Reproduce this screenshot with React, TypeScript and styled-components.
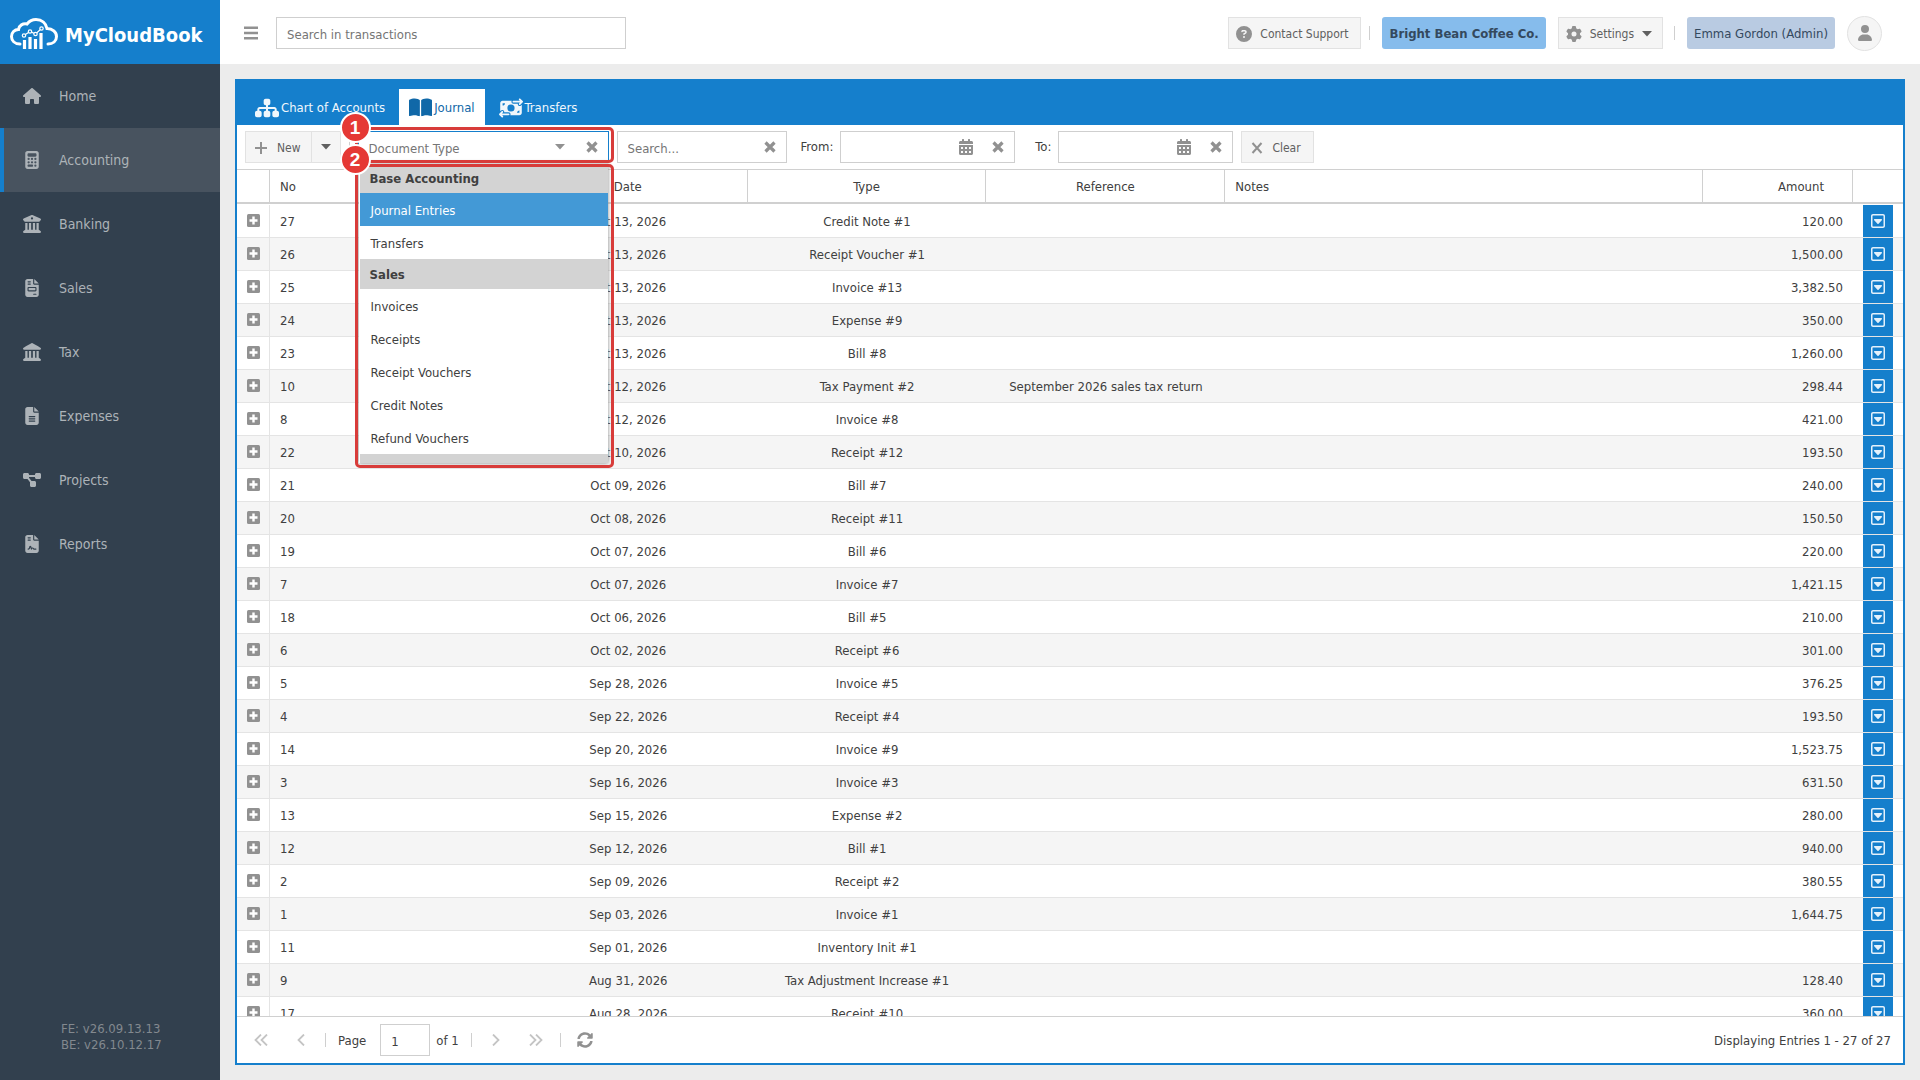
import React from "react";
import styled, { createGlobalStyle, css } from "styled-components";
import { FaCalendarAlt, FaSyncAlt } from "react-icons/fa";
import {
  FaBookOpen,
  FaBuildingColumns,
  FaCalculator,
  FaCircleQuestion,
  FaDiagramProject,
  FaFileContract,
  FaFileInvoice,
  FaFileLines,
  FaGear,
  FaHouse,
  FaLandmark,
  FaMoneyBillTransfer,
  FaRegSquareCaretDown,
  FaSitemap,
  FaUser,
} from "react-icons/fa6";

const blue = "#157fcc";
const line = "#d0d0d0";
const iconGray = "#919191";
const red = "#d83c3a";

const GlobalStyle = createGlobalStyle`
  *, *::before, *::after { box-sizing: border-box; }
  body {
    margin: 0;
    background: #ececec;
    color: #404040;
    font: 13px/16px "DejaVu Sans Condensed", "DejaVu Sans", sans-serif;
  }
  button, input { font: inherit; color: inherit; }
  button { padding: 0; border: 0; background: none; cursor: pointer; }
  a { color: inherit; text-decoration: none; }
  svg { display: block; flex: none; }
`;

/* ---------- shell ---------- */

const Shell = styled.div`
  display: flex;
  height: 100vh;
`;

const Sidebar = styled.aside`
  display: flex;
  flex-direction: column;
  flex: 0 0 220px;
  background: #32404e;
  color: #adb3b8;
`;

const Brand = styled.a`
  display: flex;
  align-items: center;
  gap: 7px;
  height: 64px;
  padding: 4px 10px 0;
  background: ${blue};
  color: #fff;
  font-size: 20px;
  line-height: 24px;
  font-weight: bold;
`;

const BrandName = styled.span`
  padding-top: 2px;
`;

const Nav = styled.nav`
  display: flex;
  flex-direction: column;
  flex: 1;
`;

const NavItem = styled.a<{ $active?: boolean }>`
  display: flex;
  align-items: center;
  gap: 15px;
  height: 64px;
  padding-left: 16px;
  font-size: 14px;
  border-left: 4px solid transparent;
  ${(p) => p.$active && css`
    background: #48535f;
    border-left-color: ${blue};
  `}
`;

const NavIcon = styled.span`
  display: flex;
  justify-content: center;
  width: 24px;
  font-size: 18px;
`;

const Version = styled.div`
  padding: 0 0 27px 61px;
  color: #83898f;
`;

const Main = styled.div`
  display: flex;
  flex-direction: column;
  flex: 1;
  min-width: 0;
`;

/* ---------- header ---------- */

const Header = styled.header`
  display: flex;
  align-items: center;
  height: 64px;
  padding: 2px 38px 0 15px;
  background: #fff;
`;

const IconButton = styled.button<{ $faded?: boolean }>`
  display: flex;
  align-items: center;
  justify-content: center;
  flex: none;
  width: 32px;
  height: 30px;
  color: ${(p) => (p.$faded ? "#c4c4c4" : iconGray)};
`;

const GlobalSearch = styled.input`
  width: 350px;
  height: 32px;
  margin: 0 auto 0 9px;
  padding: 2px 10px 0;
  border: 1px solid #cfcfcf;
  background: #fff;
  outline: none;
  &::placeholder { color: #757575; opacity: 1; }
`;

const Button = styled.button`
  display: flex;
  align-items: center;
  gap: 8px;
  height: 32px;
  padding: 1px 12px 0 7px;
  border: 1px solid #e2e2e2;
  background: #f5f5f5;
  color: #606060;
  font-size: 12px;
  svg:first-child { color: ${iconGray}; }
`;

const SettingsButton = styled(Button)`
  margin-left: 12px;
  padding-right: 10px;
`;

const Pill = styled.button<{ $strong?: boolean }>`
  height: 32px;
  padding: 2px 7px 0;
  border-radius: 3px;
  background: ${(p) => (p.$strong ? "#86bcec" : "#b9cbe2")};
  color: #34495e;
  font-weight: ${(p) => (p.$strong ? "bold" : "normal")};
`;

const Divider = styled.span<{ $left?: number; $right?: number }>`
  flex: none;
  width: 1px;
  height: 14px;
  margin: 0 ${(p) => p.$right ?? 12}px 0 ${(p) => p.$left ?? 8}px;
  background: #cfcfcf;
`;

const Avatar = styled.button`
  display: flex;
  align-items: center;
  justify-content: center;
  width: 35px;
  height: 35px;
  margin-left: 12px;
  border: 1px solid #e2e2e2;
  border-radius: 50%;
  background: #f5f5f5;
  color: ${iconGray};
  font-size: 16px;
`;

/* ---------- panel ---------- */

const Content = styled.main`
  display: flex;
  flex: 1;
  min-height: 0;
  padding: 15px;
`;

const Panel = styled.section`
  display: flex;
  flex-direction: column;
  flex: 1;
  min-width: 0;
  border: 2px solid ${blue};
  background: #fff;
`;

const Tabs = styled.div`
  display: flex;
  gap: 4px;
  padding: 8px 8px 0;
  background: ${blue};
`;

const Tab = styled.button<{ $active?: boolean }>`
  display: flex;
  align-items: center;
  gap: 2px;
  height: 36px;
  padding: 1px 10px 0;
  color: ${(p) => (p.$active ? "#1068a8" : "#f0f7fc")};
  background: ${(p) => (p.$active ? "#fff" : "transparent")};
`;

const Toolbar = styled.div`
  display: flex;
  align-items: center;
  height: 44px;
  padding: 0 8px;
`;

const SplitButton = styled.div`
  display: flex;
  height: 32px;
  border: 1px solid #e2e2e2;
  background: #f5f5f5;
  color: #606060;
`;

const SplitMain = styled.button`
  display: flex;
  align-items: center;
  gap: 10px;
  padding: 1px 10px 0 9px;
  font-size: 12px;
  svg { color: ${iconGray}; }
`;

const SplitArrow = styled.button`
  display: flex;
  align-items: center;
  justify-content: center;
  width: 29px;
  border-left: 1px solid #e2e2e2;
`;

const Field = styled.div<{ $width: number; $focused?: boolean; $left?: number }>`
  position: relative;
  display: flex;
  flex: none;
  width: ${(p) => p.$width}px;
  height: 32px;
  margin-left: ${(p) => p.$left ?? 0}px;
  border: 1px solid ${(p) => (p.$focused ? blue : "#cfcfcf")};
  background: #fff;
`;

const FieldInput = styled.input`
  flex: 1;
  min-width: 0;
  padding: 4px 0 0 10px;
  border: 0;
  outline: none;
  background: transparent;
  &::placeholder { color: #757575; opacity: 1; }
`;

const FieldLabel = styled.label<{ $left: number }>`
  margin: 0 7px 0 ${(p) => p.$left}px;
`;

const ClearButton = styled(Button)`
  gap: 9px;
  margin-left: 8px;
  padding: 1px 12px 0 9px;
`;

/* ---------- drop-down list and its callouts ---------- */

const Picker = styled.ul`
  position: absolute;
  z-index: 2;
  top: 31px;
  left: 0;
  right: 0;
  height: 300px;
  margin: 0;
  padding: 0 0 0 1px;
  overflow: hidden;
  list-style: none;
  background: #fff;
  box-shadow: 0 0 4px #888;
`;

const PickerGroup = styled.li`
  height: 30px;
  padding: 8px 10px 6px;
  background: #d3d3d3;
  font-weight: bold;
`;

const PickerItem = styled.li<{ $selected?: boolean }>`
  height: 33px;
  padding: 10px 11px 7px;
  background: ${(p) => (p.$selected ? "#4399d6" : "#fff")};
  color: ${(p) => (p.$selected ? "#fff" : "inherit")};
`;

const Callout = styled.div<{ $top: number; $height: number }>`
  position: absolute;
  z-index: 3;
  top: ${(p) => p.$top}px;
  left: -4px;
  width: 259px;
  height: ${(p) => p.$height}px;
  border: 3px solid ${red};
  border-radius: 5px;
  pointer-events: none;
`;

const Badge = styled.span<{ $top: number }>`
  position: absolute;
  z-index: 4;
  top: ${(p) => p.$top}px;
  left: -18px;
  width: 31px;
  height: 31px;
  border: 2px solid #fff;
  border-radius: 50%;
  background: #e53935;
  color: #fff;
  font: bold 19px/27px "Liberation Sans", Arial, sans-serif;
  text-align: center;
`;

/* ---------- grid ---------- */

const Grid = styled.table`
  display: flex;
  flex-direction: column;
  flex: 1;
  min-height: 0;
  border-top: 1px solid ${line};
`;

const columns = css`
  display: grid;
  grid-template-columns: 33px repeat(4, minmax(0, 1fr)) minmax(0, 2fr) 150px 50px;
`;

const GridHead = styled.thead`
  display: block;
  border-bottom: 2px solid ${line};
`;

const HeadRow = styled.tr`
  ${columns}
`;

type Align = "left" | "center" | "right";

const HeadCell = styled.th<{ $align?: Align }>`
  height: 32px;
  padding: 9px ${(p) => (p.$align === "right" ? 28 : 10)}px 7px 10px;
  border-right: 1px solid ${line};
  font-weight: normal;
  text-align: ${(p) => p.$align ?? "left"};
  &:last-child { border-right: 0; }
`;

const GridBody = styled.tbody`
  display: block;
  flex: 1;
  min-height: 0;
  padding-top: 1px;
  overflow: hidden;
`;

const Row = styled.tr`
  ${columns}
  height: 33px;
  border-bottom: 1px solid #e4e4e4;
  &:nth-child(even) { background: #f5f5f5; }
`;

const Cell = styled.td<{ $align?: Align }>`
  padding: 9px 10px 7px;
  text-align: ${(p) => p.$align ?? "left"};
  white-space: nowrap;
`;

const ExpandCell = styled.td`
  display: flex;
  justify-content: center;
  padding: 0 0 2px;
  border-right: 1px solid #e4e4e4;
`;

const ExpandButton = styled.button`
  display: flex;
  align-items: center;
  color: ${iconGray};
`;

const ActionCell = styled.td`
  padding: 0 10px;
`;

const ActionButton = styled.button`
  display: flex;
  align-items: center;
  justify-content: center;
  width: 30px;
  height: 32px;
  background: ${blue};
  color: #e4f1fb;
  font-size: 16px;
`;

/* ---------- pager ---------- */

const Pager = styled.footer`
  display: flex;
  align-items: center;
  height: 47px;
  padding: 0 12px 0 8px;
  border-top: 1px solid ${line};
`;

const PagerButton = styled(IconButton)`
  & + & { margin-left: 8px; }
`;

const PageInput = styled.input`
  width: 50px;
  height: 32px;
  margin: 0 6px 0 14px;
  padding: 2px 10px 0;
  border: 1px solid #cfcfcf;
  outline: none;
`;

const PagerLabel = styled.label`
  padding-top: 1px;
`;

const PagerText = styled.span`
  padding-top: 1px;
  &:last-child { margin-left: auto; }
`;

/* ---------- drawings ---------- */

const Logo = () => (
  <svg width="48" height="32" viewBox="0 0 48 32" fill="none" stroke="#fff" aria-hidden="true">
    <path
      strokeWidth="3"
      strokeLinecap="round"
      d="M10 26C4.500 26 1.500 22.500 1.500 18.500C1.500 14.500 4.500 11.500 8.500 11.500C9 7.500 13 5 17 6C19.500 2.800 23 1.500 26 1.500C32 1.500 36 5.500 37 10.500C42.500 10.500 46.500 14 46.500 18.500C46.500 23 43 26 38 26"
    />
    <path strokeWidth="3.200" d="M14.500 31V22M20 31V19M25.500 31V21M31 31V15" />
    <path strokeWidth="1.200" d="M14 17.500L20 13.500L25.500 16L31.500 10.500" />
    <g fill={blue} strokeWidth="1.200">
      <circle cx="14" cy="17.500" r="1.700" />
      <circle cx="20" cy="13.500" r="1.700" />
      <circle cx="25.500" cy="16" r="1.700" />
      <circle cx="31.500" cy="10.500" r="1.700" />
    </g>
  </svg>
);

const Stroke = ({ d, size = 12, width = 2 }: { d: string; size?: number; width?: number }) => (
  <svg width={size} height={size} viewBox="0 0 12 12" fill="none" stroke="currentColor" strokeWidth={width} aria-hidden="true">
    <path d={d} />
  </svg>
);

const Cross = () => <Stroke d="M1.500 1.500L10.500 10.500M10.500 1.500L1.500 10.500" width={3.2} />;
const ThinCross = () => <Stroke d="M1.500 1L10.500 11M10.500 1L1.500 11" />;
const Plus = () => <Stroke d="M6 0V12M0 6H12" />;
const Bars = () => <Stroke d="M0 1.500H12M0 6H12M0 10.500H12" size={14} />;

const PlusBox = () => (
  <svg width="13" height="13" viewBox="0 0 13 13" aria-hidden="true">
    <rect width="13" height="13" rx="1.500" fill="currentColor" />
    <path d="M6.500 2.500V10.500M2.500 6.500H10.500" stroke="#fff" strokeWidth="2.400" />
  </svg>
);

const Caret = () => (
  <svg width="10" height="6" viewBox="0 0 10 6" fill="currentColor" aria-hidden="true">
    <path d="M0 0H10L5 5.500Z" />
  </svg>
);

const Chevron = ({ double, flip }: { double?: boolean; flip?: boolean }) => (
  <svg width="14" height="12" viewBox="0 0 14 12" fill="none" stroke="currentColor" strokeWidth="1.800" aria-hidden="true">
    <g transform={flip ? "translate(14 0) scale(-1 1)" : undefined}>
      <path d={double ? "M7 .5L1.500 6L7 11.500M13 .5L7.500 6L13 11.500" : "M10 .5L4.500 6L10 11.500"} />
    </g>
  </svg>
);

/* ---------- data ---------- */

const navItems = [
  { label: "Home", icon: FaHouse },
  { label: "Accounting", icon: FaCalculator, active: true },
  { label: "Banking", icon: FaBuildingColumns },
  { label: "Sales", icon: FaFileInvoice },
  { label: "Tax", icon: FaLandmark },
  { label: "Expenses", icon: FaFileLines },
  { label: "Projects", icon: FaDiagramProject },
  { label: "Reports", icon: FaFileContract },
];

const documentTypes = [
  { group: "Base Accounting", items: ["Journal Entries", "Transfers"] },
  { group: "Sales", items: ["Invoices", "Receipts", "Receipt Vouchers", "Credit Notes", "Refund Vouchers"] },
];

const entries: [number, string, string, string, string][] = [
  [27, "Oct 13, 2026", "Credit Note #1", "", "120.00"],
  [26, "Oct 13, 2026", "Receipt Voucher #1", "", "1,500.00"],
  [25, "Oct 13, 2026", "Invoice #13", "", "3,382.50"],
  [24, "Oct 13, 2026", "Expense #9", "", "350.00"],
  [23, "Oct 13, 2026", "Bill #8", "", "1,260.00"],
  [10, "Oct 12, 2026", "Tax Payment #2", "September 2026 sales tax return", "298.44"],
  [8, "Oct 12, 2026", "Invoice #8", "", "421.00"],
  [22, "Oct 10, 2026", "Receipt #12", "", "193.50"],
  [21, "Oct 09, 2026", "Bill #7", "", "240.00"],
  [20, "Oct 08, 2026", "Receipt #11", "", "150.50"],
  [19, "Oct 07, 2026", "Bill #6", "", "220.00"],
  [7, "Oct 07, 2026", "Invoice #7", "", "1,421.15"],
  [18, "Oct 06, 2026", "Bill #5", "", "210.00"],
  [6, "Oct 02, 2026", "Receipt #6", "", "301.00"],
  [5, "Sep 28, 2026", "Invoice #5", "", "376.25"],
  [4, "Sep 22, 2026", "Receipt #4", "", "193.50"],
  [14, "Sep 20, 2026", "Invoice #9", "", "1,523.75"],
  [3, "Sep 16, 2026", "Invoice #3", "", "631.50"],
  [13, "Sep 15, 2026", "Expense #2", "", "280.00"],
  [12, "Sep 12, 2026", "Bill #1", "", "940.00"],
  [2, "Sep 09, 2026", "Receipt #2", "", "380.55"],
  [1, "Sep 03, 2026", "Invoice #1", "", "1,644.75"],
  [11, "Sep 01, 2026", "Inventory Init #1", "", ""],
  [9, "Aug 31, 2026", "Tax Adjustment Increase #1", "", "128.40"],
  [17, "Aug 28, 2026", "Receipt #10", "", "360.00"],
];

/* ---------- parts ---------- */

const DateField = ({ id, label, left }: { id: string; label: string; left: number }) => (
  <>
    <FieldLabel htmlFor={id} $left={left}>{label}</FieldLabel>
    <Field $width={175}>
      <FieldInput id={id} type="text" />
      <IconButton aria-label="Open calendar"><FaCalendarAlt size={16} /></IconButton>
      <IconButton aria-label="Clear date"><Cross /></IconButton>
    </Field>
  </>
);

const DocumentTypeField = () => (
  <Field $width={251} $focused>
    <FieldInput
      role="combobox"
      aria-label="Document Type"
      aria-expanded="true"
      aria-controls="document-types"
      placeholder="Document Type"
    />
    <IconButton aria-label="Toggle list"><Caret /></IconButton>
    <IconButton aria-label="Clear document type"><Cross /></IconButton>
    <Picker id="document-types" role="listbox" aria-label="Document types">
      {documentTypes.map(({ group, items }) => (
        <React.Fragment key={group}>
          <PickerGroup role="presentation">{group}</PickerGroup>
          {items.map((item) => (
            <PickerItem key={item} role="option" aria-selected={item === "Journal Entries"} $selected={item === "Journal Entries"}>
              {item}
            </PickerItem>
          ))}
        </React.Fragment>
      ))}
      <PickerGroup role="presentation" />
    </Picker>
    <Callout $top={-5} $height={36}><Badge $top={-18}>1</Badge></Callout>
    <Callout $top={32} $height={304}><Badge $top={-23}>2</Badge></Callout>
  </Field>
);

export default function App() {
  return (
    <Shell>
      <GlobalStyle />
      <Sidebar>
        <Brand href="#"><Logo /><BrandName>MyCloudBook</BrandName></Brand>
        <Nav aria-label="Main">
          {navItems.map(({ label, icon: Icon, active }) => (
            <NavItem key={label} href="#" $active={active}>
              <NavIcon><Icon /></NavIcon>
              {label}
            </NavItem>
          ))}
        </Nav>
        <Version>
          <div>FE: v26.09.13.13</div>
          <div>BE: v26.10.12.17</div>
        </Version>
      </Sidebar>
      <Main>
        <Header>
          <IconButton aria-label="Toggle menu"><Bars /></IconButton>
          <GlobalSearch type="search" aria-label="Search in transactions" placeholder="Search in transactions" />
          <Button><FaCircleQuestion size={16} />Contact Support</Button>
          <Divider />
          <Pill $strong>Bright Bean Coffee Co.</Pill>
          <SettingsButton><FaGear size={16} />Settings<Caret /></SettingsButton>
          <Divider $left={11} />
          <Pill>Emma Gordon (Admin)</Pill>
          <Avatar aria-label="Account"><FaUser /></Avatar>
        </Header>
        <Content>
          <Panel>
            <Tabs role="tablist">
              <Tab role="tab"><FaSitemap size={24} />Chart of Accounts</Tab>
              <Tab role="tab" aria-selected="true" $active><FaBookOpen size={23} />Journal</Tab>
              <Tab role="tab"><FaMoneyBillTransfer size={24} />Transfers</Tab>
            </Tabs>
            <Toolbar>
              <SplitButton>
                <SplitMain><Plus />New</SplitMain>
                <SplitArrow aria-label="More new items"><Caret /></SplitArrow>
              </SplitButton>
              <Divider $right={8} />
              <DocumentTypeField />
              <Field $width={170} $left={8}>
                <FieldInput aria-label="Search" placeholder="Search..." />
                <IconButton aria-label="Clear search"><Cross /></IconButton>
              </Field>
              <DateField id="date-from" label="From:" left={14} />
              <DateField id="date-to" label="To:" left={20} />
              <ClearButton><ThinCross />Clear</ClearButton>
            </Toolbar>
            <Grid>
              <GridHead>
                <HeadRow>
                  <HeadCell aria-label="Expand" />
                  <HeadCell>No</HeadCell>
                  <HeadCell $align="center">Date</HeadCell>
                  <HeadCell $align="center">Type</HeadCell>
                  <HeadCell $align="center">Reference</HeadCell>
                  <HeadCell>Notes</HeadCell>
                  <HeadCell $align="right">Amount</HeadCell>
                  <HeadCell aria-label="Actions" />
                </HeadRow>
              </GridHead>
              <GridBody>
                {entries.map(([no, date, type, reference, amount]) => (
                  <Row key={no}>
                    <ExpandCell>
                      <ExpandButton aria-label={`Expand entry ${no}`}><PlusBox /></ExpandButton>
                    </ExpandCell>
                    <Cell>{no}</Cell>
                    <Cell $align="center">{date}</Cell>
                    <Cell $align="center">{type}</Cell>
                    <Cell $align="center">{reference}</Cell>
                    <Cell />
                    <Cell $align="right">{amount}</Cell>
                    <ActionCell>
                      <ActionButton aria-label={`Actions for entry ${no}`}><FaRegSquareCaretDown /></ActionButton>
                    </ActionCell>
                  </Row>
                ))}
              </GridBody>
            </Grid>
            <Pager>
              <PagerButton $faded aria-label="First page"><Chevron double /></PagerButton>
              <PagerButton $faded aria-label="Previous page"><Chevron /></PagerButton>
              <Divider />
              <PagerLabel htmlFor="page">Page</PagerLabel>
              <PageInput id="page" defaultValue="1" />
              <PagerText>of 1</PagerText>
              <Divider $left={12} $right={8} />
              <PagerButton $faded aria-label="Next page"><Chevron flip /></PagerButton>
              <PagerButton $faded aria-label="Last page"><Chevron double flip /></PagerButton>
              <Divider $right={8} />
              <PagerButton aria-label="Refresh"><FaSyncAlt size={16} /></PagerButton>
              <PagerText>Displaying Entries 1 - 27 of 27</PagerText>
            </Pager>
          </Panel>
        </Content>
      </Main>
    </Shell>
  );
}
